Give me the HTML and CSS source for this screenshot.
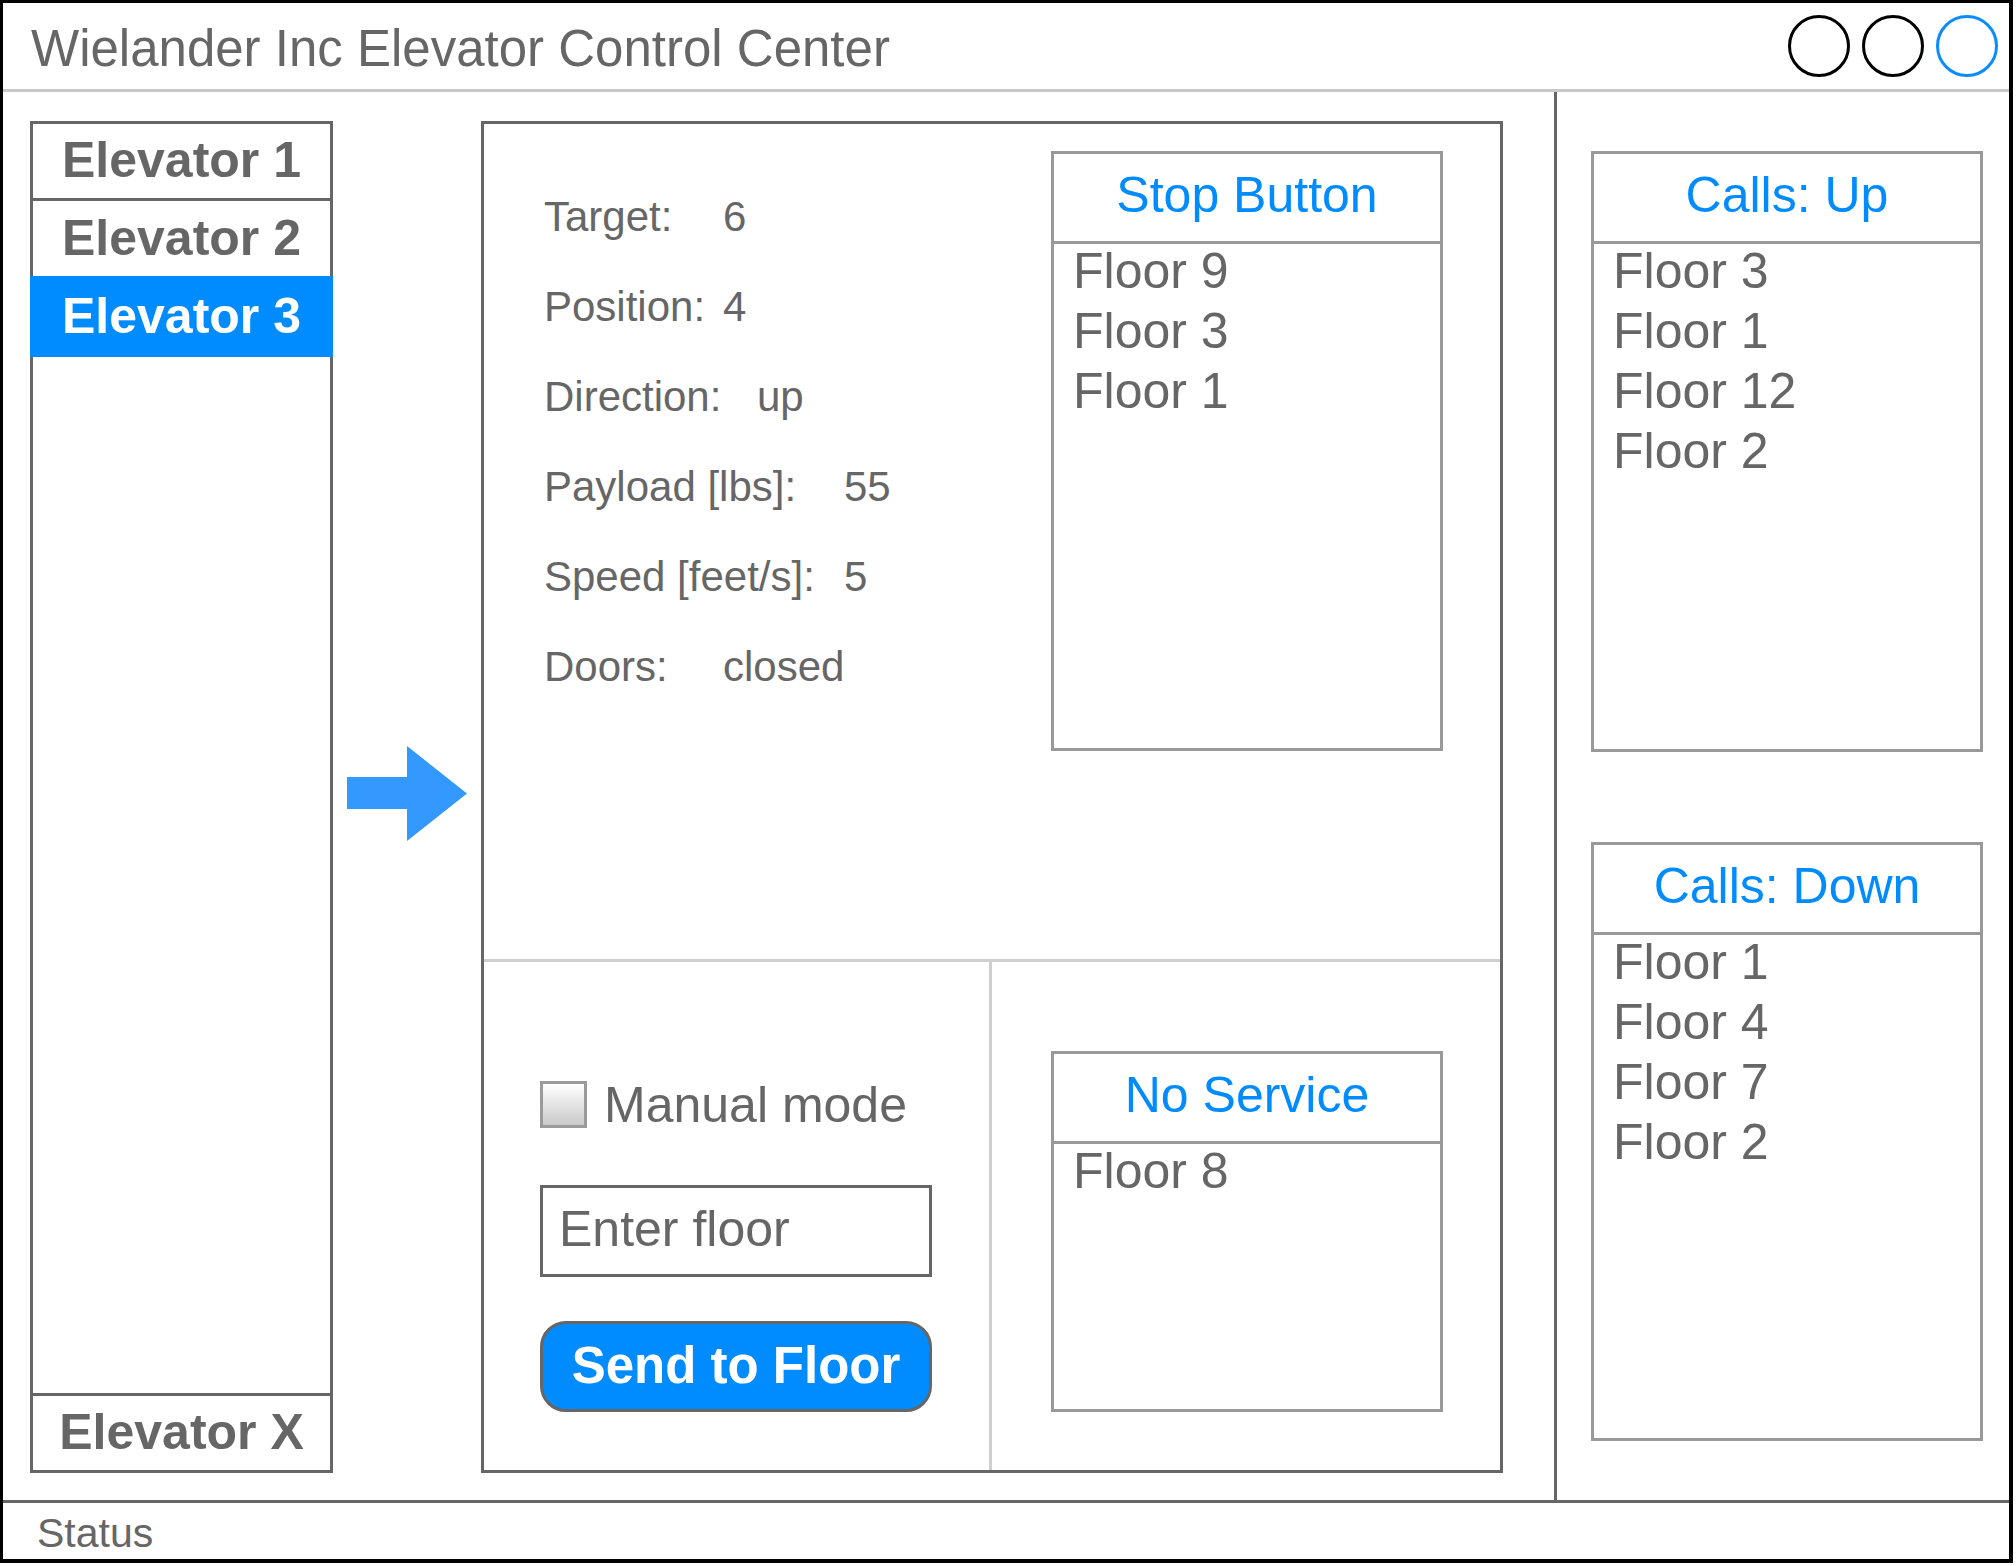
FILE: index.html
```html
<!DOCTYPE html>
<html lang="en">
<head>
<meta charset="utf-8">
<title>Wielander Inc Elevator Control Center</title>
<link rel="stylesheet" href="styles.css">
</head>
<body>
<div class="window">
  <header class="titlebar">
    <h1 class="title">Wielander Inc Elevator Control Center</h1>
    <div class="win-buttons">
      <span class="win-btn"></span>
      <span class="win-btn"></span>
      <span class="win-btn win-btn--blue"></span>
    </div>
  </header>

  <div class="workspace">
    <div class="main-area">
      <nav class="elevators">
        <div class="elev elev--first">Elevator 1</div>
        <div class="elev">Elevator 2</div>
        <div class="elev elev--active">Elevator 3</div>
        <div class="elev-spacer"></div>
        <div class="elev elev--last">Elevator X</div>
      </nav>

      <div class="arrow">
        <svg width="120" height="95" viewBox="0 0 120 95" aria-hidden="true">
          <path d="M0 31 H60 V0 L120 47.5 L60 95 V63 H0 Z" fill="#3399ff"/>
        </svg>
      </div>

      <section class="detail">
        <div class="detail-top">
          <div class="stats">
            <div class="stat"><span class="stat-label w-s">Target:</span><span>6</span></div>
            <div class="stat"><span class="stat-label w-s">Position:</span><span>4</span></div>
            <div class="stat"><span class="stat-label w-m">Direction:</span><span>up</span></div>
            <div class="stat"><span class="stat-label w-l">Payload [lbs]:</span><span>55</span></div>
            <div class="stat"><span class="stat-label w-l">Speed [feet/s]:</span><span>5</span></div>
            <div class="stat"><span class="stat-label w-s">Doors:</span><span>closed</span></div>
          </div>
          <div class="listbox listbox--stop">
            <div class="lb-head">Stop Button</div>
            <ul class="lb-list">
              <li>Floor 9</li>
              <li>Floor 3</li>
              <li>Floor 1</li>
            </ul>
          </div>
        </div>

        <div class="detail-bottom">
          <div class="controls">
            <label class="checkrow"><span class="checkbox"></span><span>Manual mode</span></label>
            <div class="floor-input">Enter floor</div>
            <button class="send-btn" type="button">Send to Floor</button>
          </div>
          <div class="service">
            <div class="listbox listbox--service">
              <div class="lb-head">No Service</div>
              <ul class="lb-list">
                <li>Floor 8</li>
              </ul>
            </div>
          </div>
        </div>
      </section>
    </div>

    <aside class="calls">
      <div class="listbox listbox--up">
        <div class="lb-head">Calls: Up</div>
        <ul class="lb-list">
          <li>Floor 3</li>
          <li>Floor 1</li>
          <li>Floor 12</li>
          <li>Floor 2</li>
        </ul>
      </div>
      <div class="listbox listbox--down">
        <div class="lb-head">Calls: Down</div>
        <ul class="lb-list">
          <li>Floor 1</li>
          <li>Floor 4</li>
          <li>Floor 7</li>
          <li>Floor 2</li>
        </ul>
      </div>
    </aside>
  </div>

  <footer class="statusbar">Status</footer>
</div>
</body>
</html>
```

FILE: styles.css
```css
* { box-sizing: border-box; }

html, body {
  margin: 0;
  padding: 0;
  background: #fff;
}

body {
  font-family: "Liberation Sans", Arial, Helvetica, sans-serif;
  color: #666;
}

.window {
  width: 2013px;
  height: 1563px;
  border-style: solid;
  border-color: #000;
  border-width: 3px 4px 4px 3px;
  display: flex;
  flex-direction: column;
  background: #fff;
}

/* Title bar */
.titlebar {
  height: 89px;
  flex: none;
  display: flex;
  align-items: center;
  justify-content: space-between;
  padding: 0 11px 0 28px;
  border-bottom: 3px solid #c8c8c8;
}

.title {
  margin: 4px 0 0;
  font-size: 51px;
  font-weight: 400;
  color: #666;
  white-space: nowrap;
}

.win-buttons {
  display: flex;
  gap: 12px;
}

.win-btn {
  width: 62px;
  height: 62px;
  border: 3px solid #000;
  border-radius: 50%;
}

.win-btn--blue { border-color: #0a8cff; }

/* Workspace */
.workspace {
  flex: 1;
  display: flex;
  min-height: 0;
}

.main-area {
  flex: 1;
  display: flex;
  padding: 29px 0 27px 27px;
}

/* Elevator list */
.elevators {
  width: 303px;
  flex: none;
  border: 3px solid #666;
  display: flex;
  flex-direction: column;
}

.elev {
  display: flex;
  align-items: center;
  justify-content: center;
  font-size: 50px;
  font-weight: 700;
  color: #666;
  height: 75px;
  flex: none;
  padding-bottom: 2px;
}

.elev--first {
  height: 77px;
  border-bottom: 3px solid #666;
}

.elev--active {
  height: 81px;
  margin: 0 -3px;
  background: #008cff;
  color: #fff;
}

.elev-spacer { flex: 1; }

.elev--last {
  height: 77px;
  border-top: 3px solid #666;
}

/* Arrow */
.arrow {
  width: 148px;
  flex: none;
  display: flex;
  align-items: center;
  justify-content: center;
  padding-bottom: 7px;
}

.arrow svg { display: block; }

/* Detail panel */
.detail {
  width: 1022px;
  flex: none;
  border: 3px solid #666;
  display: flex;
  flex-direction: column;
}

.detail-top {
  height: 838px;
  flex: none;
  display: flex;
  align-items: flex-start;
  padding-top: 27px;
  border-bottom: 3px solid #cfcfcf;
}

.stats {
  flex: 1;
  padding: 21px 0 0 60px;
  font-size: 42px;
  line-height: 90px;
}

.stat {
  display: flex;
  white-space: nowrap;
}

.stat-label { flex: none; }
.w-s { width: 179px; }
.w-m { width: 213px; }
.w-l { width: 300px; }

/* List boxes */
.listbox {
  border: 3px solid #999;
  display: flex;
  flex-direction: column;
  flex: none;
}

.listbox--stop {
  width: 392px;
  height: 600px;
  margin-right: 57px;
}

.listbox--service {
  width: 392px;
  height: 361px;
}

.listbox--up {
  width: 392px;
  height: 601px;
}

.listbox--down {
  width: 392px;
  height: 599px;
  margin-top: 90px;
}

.lb-head {
  height: 90px;
  flex: none;
  display: flex;
  align-items: center;
  justify-content: center;
  padding-bottom: 5px;
  border-bottom: 3px solid #999;
  color: #008cff;
  font-size: 50px;
  white-space: nowrap;
}

.lb-list {
  list-style: none;
  margin: -3px 0 0;
  padding: 0 0 0 19px;
  font-size: 50px;
  line-height: 60px;
  color: #666;
}

/* Bottom controls */
.detail-bottom {
  flex: 1;
  display: grid;
  grid-template-columns: 508px 1fr;
}

.controls {
  border-right: 3px solid #cfcfcf;
  padding: 119px 0 0 56px;
  display: flex;
  flex-direction: column;
  align-items: flex-start;
}

.checkrow {
  display: flex;
  align-items: center;
  gap: 17px;
  height: 47px;
  font-size: 50px;
  color: #666;
  white-space: nowrap;
}

.checkbox {
  width: 47px;
  height: 47px;
  flex: none;
  border: 3px solid #9a9a9a;
  background: linear-gradient(#ffffff, #c9c9c9);
}

.floor-input {
  margin-top: 57px;
  width: 392px;
  height: 92px;
  border: 3px solid #666;
  padding: 0 0 5px 16px;
  display: flex;
  align-items: center;
  font-size: 50px;
  color: #666;
}

.send-btn {
  margin-top: 44px;
  width: 392px;
  height: 91px;
  border: 3px solid #666;
  border-radius: 26px;
  background: #008cff;
  color: #fff;
  font-family: "Liberation Sans", Arial, Helvetica, sans-serif;
  font-size: 51px;
  font-weight: 700;
  padding: 0 0 3px;
}

.service {
  padding: 89px 0 0 59px;
}

/* Calls panel */
.calls {
  width: 455px;
  flex: none;
  border-left: 3px solid #666;
  padding: 59px 0 0 34px;
  display: flex;
  flex-direction: column;
}

/* Status bar */
.statusbar {
  height: 59px;
  flex: none;
  border-top: 3px solid #666;
  display: flex;
  align-items: center;
  padding: 5px 0 0 34px;
  font-size: 41px;
  color: #666;
}
```
